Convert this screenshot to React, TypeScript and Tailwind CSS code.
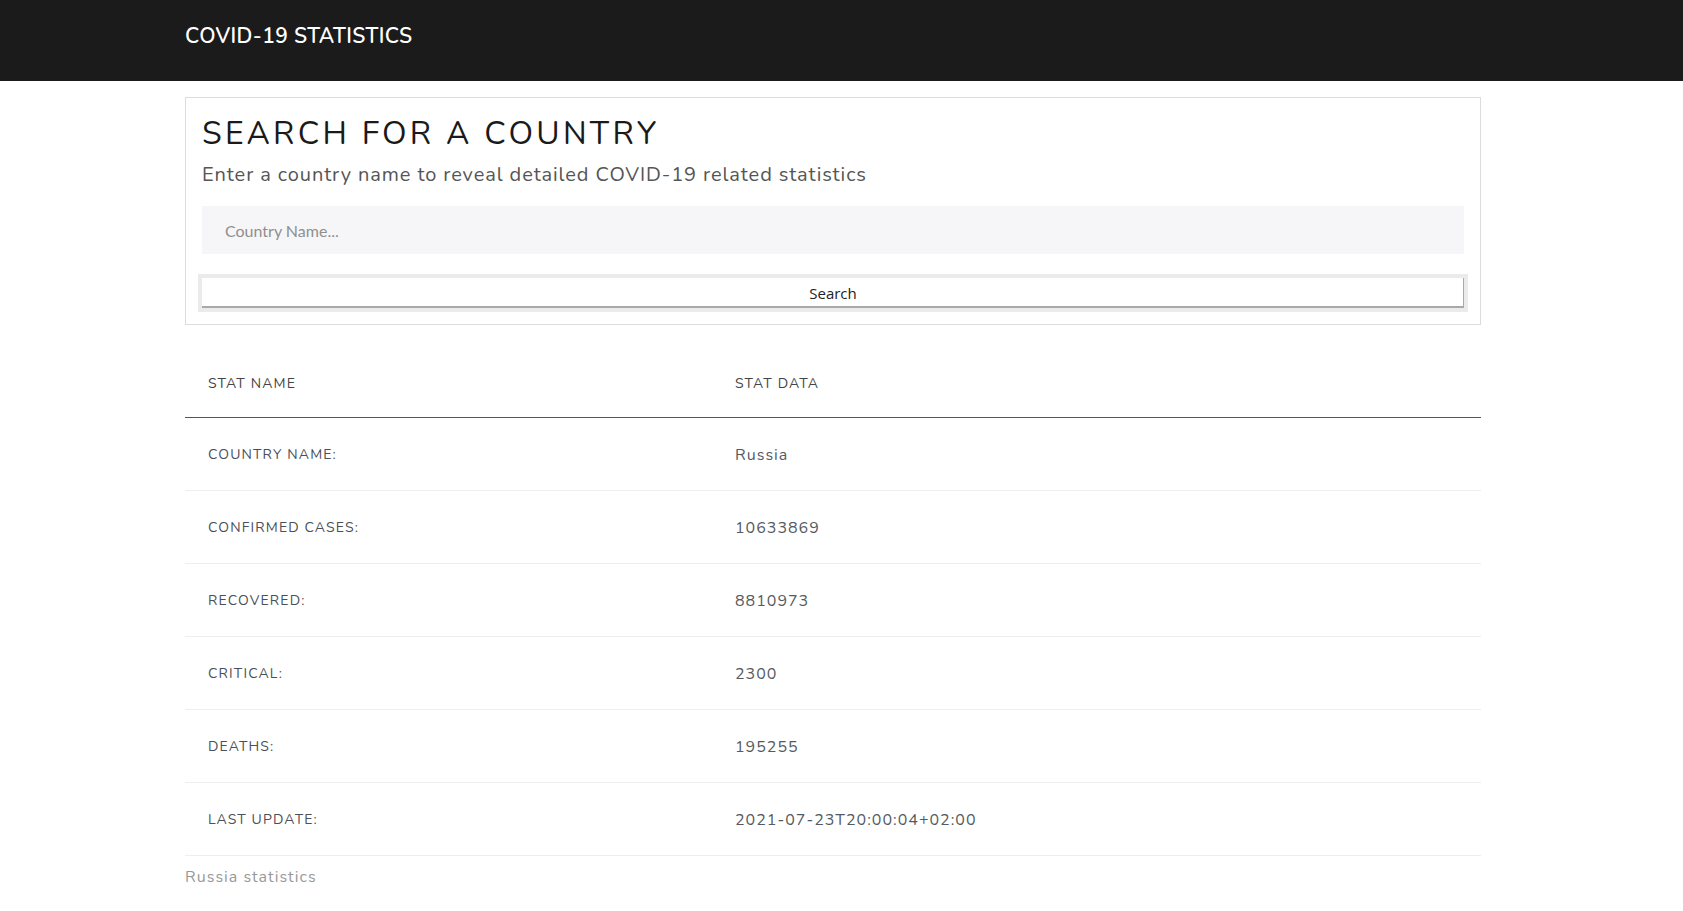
const stats = [
  { name: "Country Name:", value: "Russia" },
  { name: "Confirmed Cases:", value: "10633869" },
  { name: "Recovered:", value: "8810973" },
  { name: "Critical:", value: "2300" },
  { name: "Deaths:", value: "195255" },
  { name: "Last Update:", value: "2021-07-23T20:00:04+02:00" },
];

const App = () => {
  return (
    <div className="min-h-screen bg-white font-['Nunito','Lato',sans-serif]">
      <header className="h-[81px] bg-[#1b1b1b]">
        <div className="ml-[185px] pt-[22px]">
          <h1 className="text-[21px] leading-[28px] font-semibold tracking-[0.4px] text-white">
            COVID-19 STATISTICS
          </h1>
        </div>
      </header>

      <main className="ml-[185px] w-[1296px] pb-10">
        <section className="mt-[16px] border border-[#dcdcdc] px-4 pt-[16px] pb-[12px]">
          <h2 className="text-[32px] leading-[40px] tracking-[3.3px] text-[#1a1a1a]">
            SEARCH FOR A COUNTRY
          </h2>
          <p className="mt-[7px] text-[20px] leading-[28px] tracking-[0.9px] text-[#555]">
            Enter a country name to reveal detailed COVID-19 related statistics
          </p>
          <input
            type="text"
            placeholder="Country Name..."
            className="mt-[17px] block h-[48px] w-full bg-[#f6f6f8] px-[23px] font-['Lato',sans-serif] text-[16px] text-[#333] outline-none placeholder:text-[#8f8f8f]"
          />
          <button className="-mx-[4px] mt-[20px] block h-[38px] w-[calc(100%+8px)] border-[4px] border-[#ebebeb] bg-white font-['Open_Sans',sans-serif] text-[15px] text-[#222] shadow-[inset_-1px_-2px_0_#a9a9a9]">
            Search
          </button>
        </section>

        <div className="mt-[23px]">
          <div className="flex h-[70px] items-center border-b border-[#555] pt-[2px] text-[14px] tracking-[1.15px] text-[#444]">
            <div className="w-[550px] pl-[23px]">STAT NAME</div>
            <div>STAT DATA</div>
          </div>
          {stats.map((s) => (
            <div
              key={s.name}
              className="flex h-[73px] items-center border-b border-[#eeeeee]"
            >
              <div className="w-[550px] pl-[23px] text-[14px] tracking-[1.15px] text-[#4a4f58] uppercase">
                {s.name}
              </div>
              <div className="pt-[2px] text-[16px] tracking-[1px] text-[#555a60]">
                {s.value}
              </div>
            </div>
          ))}
          <p className="mt-[10px] text-[16px] leading-[22px] tracking-[1px] text-[#999]">
            Russia statistics
          </p>
        </div>
      </main>
    </div>
  );
};

export default App;
